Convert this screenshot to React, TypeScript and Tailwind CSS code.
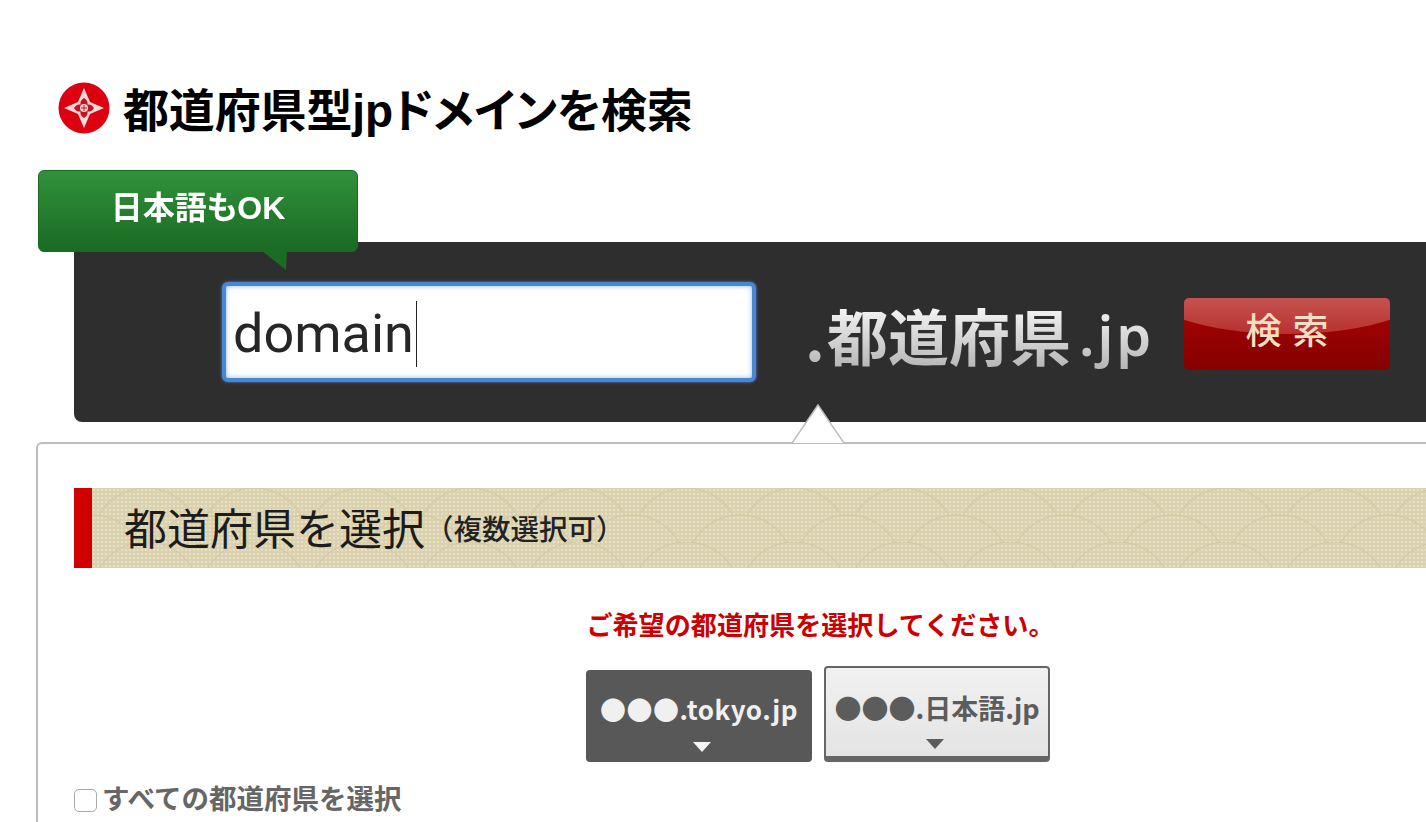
const cjk = "font-['Liberation_Sans','Noto_Sans_CJK_JP',sans-serif]";
const noto = "font-['Noto_Sans_CJK_JP',sans-serif]";

const Crest = () => (
  <svg width="52" height="52" viewBox="0 0 52 52" className="shrink-0 blur-[0.4px]">
    <circle cx="26" cy="26" r="25.5" fill="#dc0010" />
    <path
      d="M26 6 L32 20 L46 26 L32 32 L26 46 L20 32 L6 26 L20 20 Z"
      fill="#f8d8d8"
    />
    <path
      d="M26 16 C29 18 30 20 29.5 22.5 C32 22 34 23 36 26 C34 29 32 30 29.5 29.5 C30 32 29 34 26 36 C23 34 22 32 22.5 29.5 C20 30 18 29 16 26 C18 23 20 22 22.5 22.5 C22 20 23 18 26 16 Z"
      fill="#c9101e"
    />
    <circle cx="26" cy="26" r="4" fill="#f8d8d8" />
    <path d="M23 26 H29 M26 23 V29" stroke="#c9101e" strokeWidth="1" />
  </svg>
);

const Scales = () => (
  <svg className="absolute inset-0 h-full w-full" aria-hidden="true">
    <defs>
      <pattern id="dots" width="4" height="4" patternUnits="userSpaceOnUse">
        <circle cx="2" cy="2" r="0.9" fill="#eee8d2" />
      </pattern>
      <pattern id="waves" width="72" height="36" patternUnits="userSpaceOnUse" patternTransform="scale(1.5)">
        <path
          d="M4.6 18.3 A36 36 0 0 1 67.4 18.3 M40.6 36.3 A36 36 0 0 1 103.4 36.3 M-31.4 36.3 A36 36 0 0 1 31.4 36.3"
          fill="none"
          stroke="#d3caa5"
          strokeWidth="0.7"
        />
      </pattern>
    </defs>
    <rect width="100%" height="100%" fill="url(#dots)" />
    <rect width="100%" height="100%" fill="url(#waves)" />
  </svg>
);

const TabDown = ({ color }: { color: string }) => (
  <svg width="18" height="10" viewBox="0 0 18 10" className="blur-[0.4px]">
    <path d="M0 0 H18 L9 10 Z" fill={color} />
  </svg>
);

export default function App() {
  return (
    <div className={`relative h-[822px] w-[1426px] overflow-hidden bg-white ${cjk}`}>
      {/* Title */}
      <div className="flex items-start gap-[13px] pl-[58px] pt-[82px]">
        <Crest />
        <h1 className="pt-[3px] text-[46px] leading-[52px] font-bold tracking-[-0.15px] text-black [font-feature-settings:'palt']">
          都道府県型jpドメインを検索
        </h1>
      </div>

      {/* Search bar */}
      <div className="relative mt-[105px] ml-[74px] flex h-[180px] w-[1488px] items-start rounded-l-lg bg-[#2e2e2e] pl-[148px]">
        {/* Bubble */}
        <div className="absolute top-[-72px] left-[-36px] z-10 flex h-[82px] w-[320px] items-center justify-center rounded-md border border-[#1a6a24] bg-gradient-to-b from-[#30923a] to-[#1a6b24] pb-[6px] text-[32px] leading-none font-bold text-white [font-feature-settings:'palt']">
          <span className="blur-[0.4px]">日本語もOK</span>
          <svg width="26" height="20" viewBox="0 0 26 20" className="absolute top-[80px] left-[223px]">
            <path d="M0 0 H25 L24 19 Z" fill="#1a6b24" />
          </svg>
        </div>

        <div className="mt-[40px] flex h-[100px] w-[534px] items-center rounded-[6px] border-[4px] border-[#4a86d4] bg-white pl-[7px] pt-[3px] shadow-[inset_0_0_5px_#8fb9ee,0_0_3px_#4f8fdc]">
          <span className="font-['Roboto',sans-serif] text-[54px] leading-none text-[#262626]">domain</span>
          <span className="ml-[2px] h-[66px] w-[1.5px] bg-[#222]" />
        </div>

        <div className="mt-[56px] ml-[49px] flex h-[72px] w-[350px] items-center bg-gradient-to-b from-white to-[#b4b4b4] bg-clip-text text-[61px] leading-none font-bold text-transparent">
          <span className={`w-[22px] ${noto}`}>.</span>
          <span className={noto}>都道府県</span>
          <span className="ml-[8px] font-['Noto_Sans',sans-serif] text-[56px] font-semibold tracking-[3px]">.jp</span>
        </div>

        <div className="relative mt-[56px] ml-[29px] flex h-[72px] w-[206px] items-center justify-center overflow-hidden rounded-[5px] bg-gradient-to-b from-[#a80404] to-[#860000] pb-[4px]">
          <div className="absolute top-[-68px] left-[-47px] h-[104px] w-[300px] rounded-[50%] bg-gradient-to-b from-[#d8898a] to-[#b83030]" />
          <span className="relative -mr-[11px] text-[36px] leading-none font-medium tracking-[11px] text-[#f3dfc3]">検索</span>
        </div>
      </div>

      {/* Panel */}
      <div className="relative mt-[20px] ml-[36px] h-[400px] w-[1564px] rounded-tl-md border-t-2 border-l-2 border-[#bdbdbd] pt-[44px] pl-[36px]">
        <svg width="52" height="40" viewBox="0 0 52 40" className="absolute top-[-40px] left-[754px]">
          <path d="M0 39 L26 1 L52 39" fill="white" stroke="#bdbdbd" strokeWidth="1.5" />
        </svg>

        <div className="relative flex h-[80px] items-center border-l-[18px] border-[#d00000] bg-[#dad2ae] pt-[5px] pl-[32px]">
          <Scales />
          <span className="relative text-[43px] leading-none text-[#1c1c1c]">都道府県を選択</span>
          <span className="relative text-[28.5px] leading-none font-medium text-[#222]">（複数選択可）</span>
        </div>

        <div className="-ml-[38px] flex flex-col items-center">
          <p className="mt-[39px] ml-[5px] text-[26.1px] leading-[38px] font-bold text-[#cc0000]">
            ご希望の都道府県を選択してください。
          </p>
          <div className="mt-[21px] flex items-end gap-[12px]">
            <div className="flex h-[92px] w-[226px] flex-col items-center rounded-[4px] bg-[#585858] pt-[19px] text-white">
              <span className={`text-[26px] leading-[40px] font-bold tracking-[0.5px] text-[#f0f0f0] ${noto}`}>●●●.tokyo.jp</span>
              <div className="mt-[13px] ml-[5px] flex"><TabDown color="#f4f4f4" /></div>
            </div>
            <div className="flex h-[96px] w-[226px] flex-col items-center rounded-[4px] border-2 border-b-[6px] border-[#666] bg-gradient-to-b from-[#f1f1f1] to-[#e4e4e4] pt-[20px] text-[#5c5c5c]">
              <span className={`text-[27px] leading-[40px] font-bold ${noto}`}>●●●.日本語.jp</span>
              <div className="mt-[11px] -ml-[4px] flex"><TabDown color="#5c5c5c" /></div>
            </div>
          </div>
        </div>

        <label className="mt-[18px] flex items-center gap-[5px] text-[27.5px] leading-[40px] font-bold text-[#666]">
          <span className="h-[23px] w-[23px] rounded-[5px] border border-[#aaa] bg-white" />
          すべての都道府県を選択
        </label>
      </div>
    </div>
  );
}
